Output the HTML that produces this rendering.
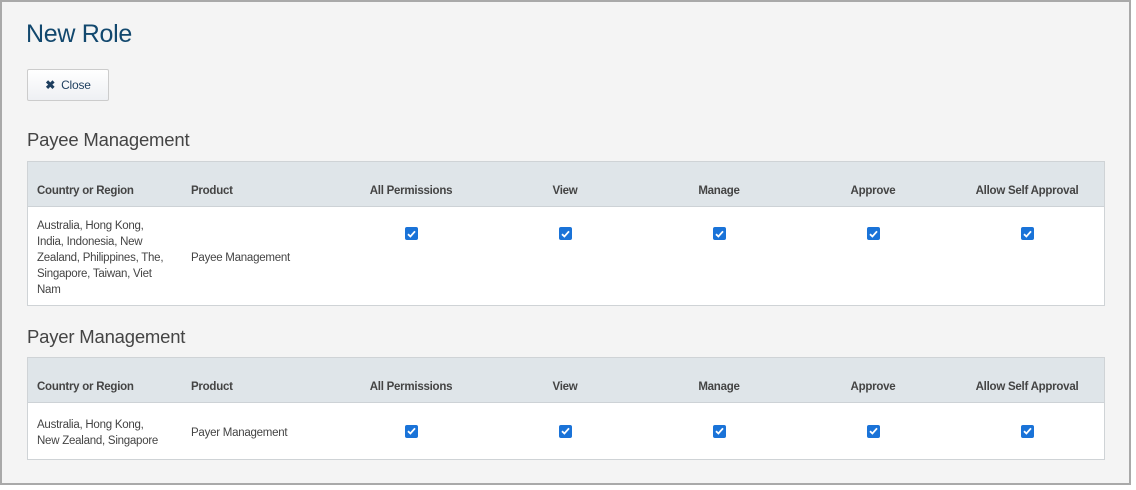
<!DOCTYPE html>
<html><head><meta charset="utf-8"><style>
*{box-sizing:border-box;margin:0;padding:0}
body{width:1136px;height:490px;background:#fff;font-family:"Liberation Sans",sans-serif;position:relative;overflow:hidden}
.frame{position:absolute;left:0;top:0;width:1131px;height:485px;border:2px solid #a9a9a9;background:#f4f4f4}
h1{position:absolute;left:26px;top:20px;font-size:25px;font-weight:normal;color:#12486e;letter-spacing:-0.3px}
.btn{position:absolute;left:27px;top:69px;width:82px;height:32px;border:1px solid #ccc;border-radius:2px;background:linear-gradient(#fff,#eef0f3);font-size:12px;color:#1d3e5e;display:flex;align-items:center;justify-content:center;letter-spacing:-0.2px}
.btn b{font-size:12px;margin-right:6px}
h2{position:absolute;left:27px;font-size:18.5px;font-weight:normal;color:#444;letter-spacing:-0.2px}
.tbl{position:absolute;left:27px;width:1078px;border:1px solid #cfd3d6;background:#fff}
.hd{height:45px;background:#dfe5e9;border-bottom:1px solid #cdd2d6;position:relative}
.row{position:relative}
.c{position:absolute;top:0;height:100%;display:flex;align-items:center;font-size:11.5px;letter-spacing:-0.25px;color:#444}
.row .c{padding-top:4px}
.hd .c{font-weight:bold;color:#444;font-size:11.5px;align-items:flex-end;padding-bottom:9px}
.cc{justify-content:center;width:154px}
.row .cc{padding-top:0}
.cb{width:13px;height:13px;background:#1a73d8;border-radius:2px;display:flex;align-items:center;justify-content:center}
.t{line-height:16px}
</style></head><body>
<div class="frame"></div>
<h1>New Role</h1>
<div class="btn"><b>✖</b>Close</div>

<h2 style="top:129px">Payee Management</h2>
<div class="tbl" style="top:161px;height:145px">
 <div class="hd">
  <div class="c" style="left:9px">Country or Region</div>
  <div class="c" style="left:163px">Product</div>
  <div class="c cc" style="left:306px">All Permissions</div>
  <div class="c cc" style="left:460px">View</div>
  <div class="c cc" style="left:614px">Manage</div>
  <div class="c cc" style="left:768px">Approve</div>
  <div class="c cc" style="left:922px">Allow Self Approval</div>
 </div>
 <div class="row" style="height:98px">
  <div class="c t" style="left:9px;width:145px">Australia, Hong Kong,<br>India, Indonesia, New<br>Zealand, Philippines, The,<br>Singapore, Taiwan, Viet<br>Nam</div>
  <div class="c" style="left:163px">Payee Management</div>
  <div class="c cc" style="left:306px;height:auto;top:20px"><span class="cb"><svg width="9" height="8" viewBox="0 0 9 8"><path d="M1 4.2 3.4 6.5 8 1.3" fill="none" stroke="#fff" stroke-width="1.8"/></svg></span></div>
  <div class="c cc" style="left:460px;height:auto;top:20px"><span class="cb"><svg width="9" height="8" viewBox="0 0 9 8"><path d="M1 4.2 3.4 6.5 8 1.3" fill="none" stroke="#fff" stroke-width="1.8"/></svg></span></div>
  <div class="c cc" style="left:614px;height:auto;top:20px"><span class="cb"><svg width="9" height="8" viewBox="0 0 9 8"><path d="M1 4.2 3.4 6.5 8 1.3" fill="none" stroke="#fff" stroke-width="1.8"/></svg></span></div>
  <div class="c cc" style="left:768px;height:auto;top:20px"><span class="cb"><svg width="9" height="8" viewBox="0 0 9 8"><path d="M1 4.2 3.4 6.5 8 1.3" fill="none" stroke="#fff" stroke-width="1.8"/></svg></span></div>
  <div class="c cc" style="left:922px;height:auto;top:20px"><span class="cb"><svg width="9" height="8" viewBox="0 0 9 8"><path d="M1 4.2 3.4 6.5 8 1.3" fill="none" stroke="#fff" stroke-width="1.8"/></svg></span></div>
 </div>
</div>

<h2 style="top:326px">Payer Management</h2>
<div class="tbl" style="top:357px;height:103px">
 <div class="hd">
  <div class="c" style="left:9px">Country or Region</div>
  <div class="c" style="left:163px">Product</div>
  <div class="c cc" style="left:306px">All Permissions</div>
  <div class="c cc" style="left:460px">View</div>
  <div class="c cc" style="left:614px">Manage</div>
  <div class="c cc" style="left:768px">Approve</div>
  <div class="c cc" style="left:922px">Allow Self Approval</div>
 </div>
 <div class="row" style="height:56px">
  <div class="c t" style="left:9px;width:145px">Australia, Hong Kong,<br>New Zealand, Singapore</div>
  <div class="c" style="left:163px">Payer Management</div>
  <div class="c cc" style="left:306px"><span class="cb"><svg width="9" height="8" viewBox="0 0 9 8"><path d="M1 4.2 3.4 6.5 8 1.3" fill="none" stroke="#fff" stroke-width="1.8"/></svg></span></div>
  <div class="c cc" style="left:460px"><span class="cb"><svg width="9" height="8" viewBox="0 0 9 8"><path d="M1 4.2 3.4 6.5 8 1.3" fill="none" stroke="#fff" stroke-width="1.8"/></svg></span></div>
  <div class="c cc" style="left:614px"><span class="cb"><svg width="9" height="8" viewBox="0 0 9 8"><path d="M1 4.2 3.4 6.5 8 1.3" fill="none" stroke="#fff" stroke-width="1.8"/></svg></span></div>
  <div class="c cc" style="left:768px"><span class="cb"><svg width="9" height="8" viewBox="0 0 9 8"><path d="M1 4.2 3.4 6.5 8 1.3" fill="none" stroke="#fff" stroke-width="1.8"/></svg></span></div>
  <div class="c cc" style="left:922px"><span class="cb"><svg width="9" height="8" viewBox="0 0 9 8"><path d="M1 4.2 3.4 6.5 8 1.3" fill="none" stroke="#fff" stroke-width="1.8"/></svg></span></div>
 </div>
</div>
</body></html>
